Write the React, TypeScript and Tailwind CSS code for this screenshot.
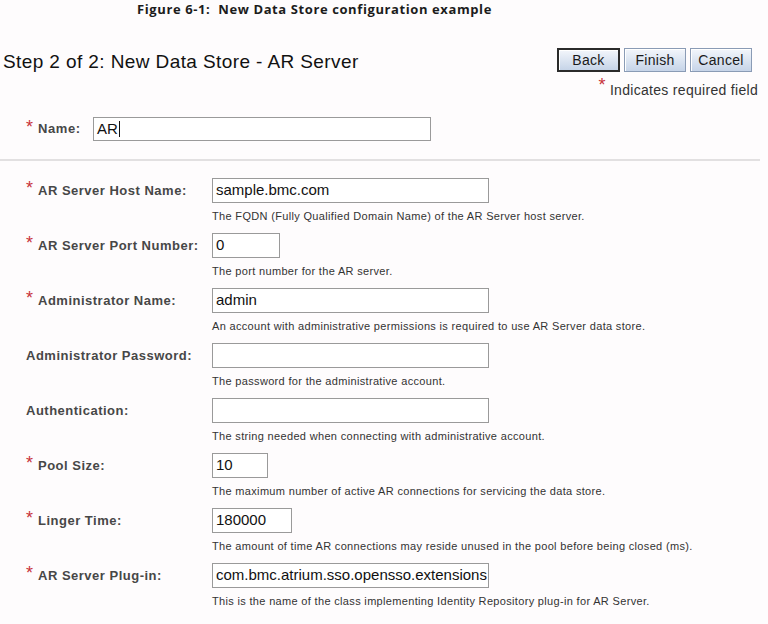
import React from "react";

type Field = {
  label: string;
  req: boolean;
  value: string;
  w: string;
  help: string;
};

const fields: Field[] = [
  { label: "AR Server Host Name:", req: true, value: "sample.bmc.com", w: "w-[277px]", help: "The FQDN (Fully Qualified Domain Name) of the AR Server host server." },
  { label: "AR Server Port Number:", req: true, value: "0", w: "w-[68px]", help: "The port number for the AR server." },
  { label: "Administrator Name:", req: true, value: "admin", w: "w-[277px]", help: "An account with administrative permissions is required to use AR Server data store." },
  { label: "Administrator Password:", req: false, value: "", w: "w-[277px]", help: "The password for the administrative account." },
  { label: "Authentication:", req: false, value: "", w: "w-[277px]", help: "The string needed when connecting with administrative account." },
  { label: "Pool Size:", req: true, value: "10", w: "w-[56px]", help: "The maximum number of active AR connections for servicing the data store." },
  { label: "Linger Time:", req: true, value: "180000", w: "w-[80px]", help: "The amount of time AR connections may reside unused in the pool before being closed (ms)." },
  { label: "AR Server Plug-in:", req: true, value: "com.bmc.atrium.sso.opensso.extensions", w: "w-[277px]", help: "This is the name of the class implementing Identity Repository plug-in for AR Server." },
];

function Asterisk() {
  return (
    <span className="w-[12px] shrink-0 -mt-[4px] text-[18px] leading-[15px] text-[#c8333a]">*</span>
  );
}

function Btn({ children, focused }: { children: React.ReactNode; focused?: boolean }) {
  return (
    <div
      className={
        focused
          ? "flex h-[24px] w-[63px] items-center justify-center border-2 border-[#2b2b2b] bg-gradient-to-b from-[#f3f6fb] to-[#c6d4e8] text-[14px] leading-none text-[#1a1a1a] tracking-[0.3px] shadow-[inset_1px_1px_0_#ffffff]"
          : "flex h-[24px] w-[62px] items-center justify-center border border-[#8a9bb5] bg-gradient-to-b from-[#f3f6fb] to-[#c6d4e8] text-[14px] leading-none text-[#1a1a1a] tracking-[0.3px] shadow-[inset_1px_1px_0_#ffffff]"
      }
    >
      {children}
    </div>
  );
}

export default function App() {
  return (
    <div className="w-[768px] h-[624px] overflow-hidden bg-[#fefcfd] font-['Liberation_Sans',Arial,sans-serif] text-[#111]">
      <div className="pt-[1px] pl-[137px] whitespace-pre font-['Open_Sans',sans-serif] text-[13px] font-bold leading-[16px] tracking-[0.6px] text-[#1c1c1c]">
        {"Figure 6-1:  New Data Store configuration example"}
      </div>

      <div className="mt-[31px] flex items-start justify-between pr-[16px]">
        <div className="mt-[2px] pl-[3px] text-[19px] leading-[23px] tracking-[0.4px] text-[#111]">
          Step 2 of 2: New Data Store - AR Server
        </div>
        <div className="flex gap-[4px]">
          <Btn focused>Back</Btn>
          <Btn>Finish</Btn>
          <Btn>Cancel</Btn>
        </div>
      </div>

      <div className="mt-[8px] h-[18px] pr-[10px] text-right text-[14px] leading-[18px] tracking-[0.3px] text-[#333]">
        <span className="relative -top-[4px] text-[18px] leading-[0px] text-[#c8333a]">*</span> Indicates required field
      </div>

      <div className="mt-[18px] flex items-center pl-[26px]">
        <div className="flex h-[24px] w-[67px] items-center">
          <Asterisk />
          <span className="text-[13px] font-bold leading-[16px] tracking-[0.6px] text-[#474747]">Name:</span>
        </div>
        <div className="flex h-[24px] w-[338px] items-center border border-[#9a9a9a] bg-white px-[3px] text-[15px] text-[#111]">
          AR
          <span className="ml-[1px] h-[16px] w-[1px] bg-[#111]" />
        </div>
      </div>

      <div className="mt-[18px] h-[2px] w-[760px] bg-[#e2e0e1]" />

      <div className="mt-[17px] flex flex-col">
        {fields.map((f) => (
          <div key={f.label} className="flex pb-[10px]">
            <div className="flex h-[25px] w-[212px] shrink-0 items-center pl-[26px]">
              {f.req && <Asterisk />}
              <span className="whitespace-nowrap text-[13px] font-bold leading-[16px] tracking-[0.5px] text-[#474747]">
                {f.label}
              </span>
            </div>
            <div className="flex flex-col">
              <div
                className={
                  f.w +
                  " flex h-[25px] items-center overflow-hidden whitespace-nowrap border border-[#9a9a9a] bg-white px-[3px] text-[15px] text-[#111]"
                }
              >
                {f.value}
              </div>
              <div className="mt-[7px] whitespace-nowrap text-[11px] leading-[13px] tracking-[0.33px] text-[#333]">
                {f.help}
              </div>
            </div>
          </div>
        ))}
      </div>
    </div>
  );
}
